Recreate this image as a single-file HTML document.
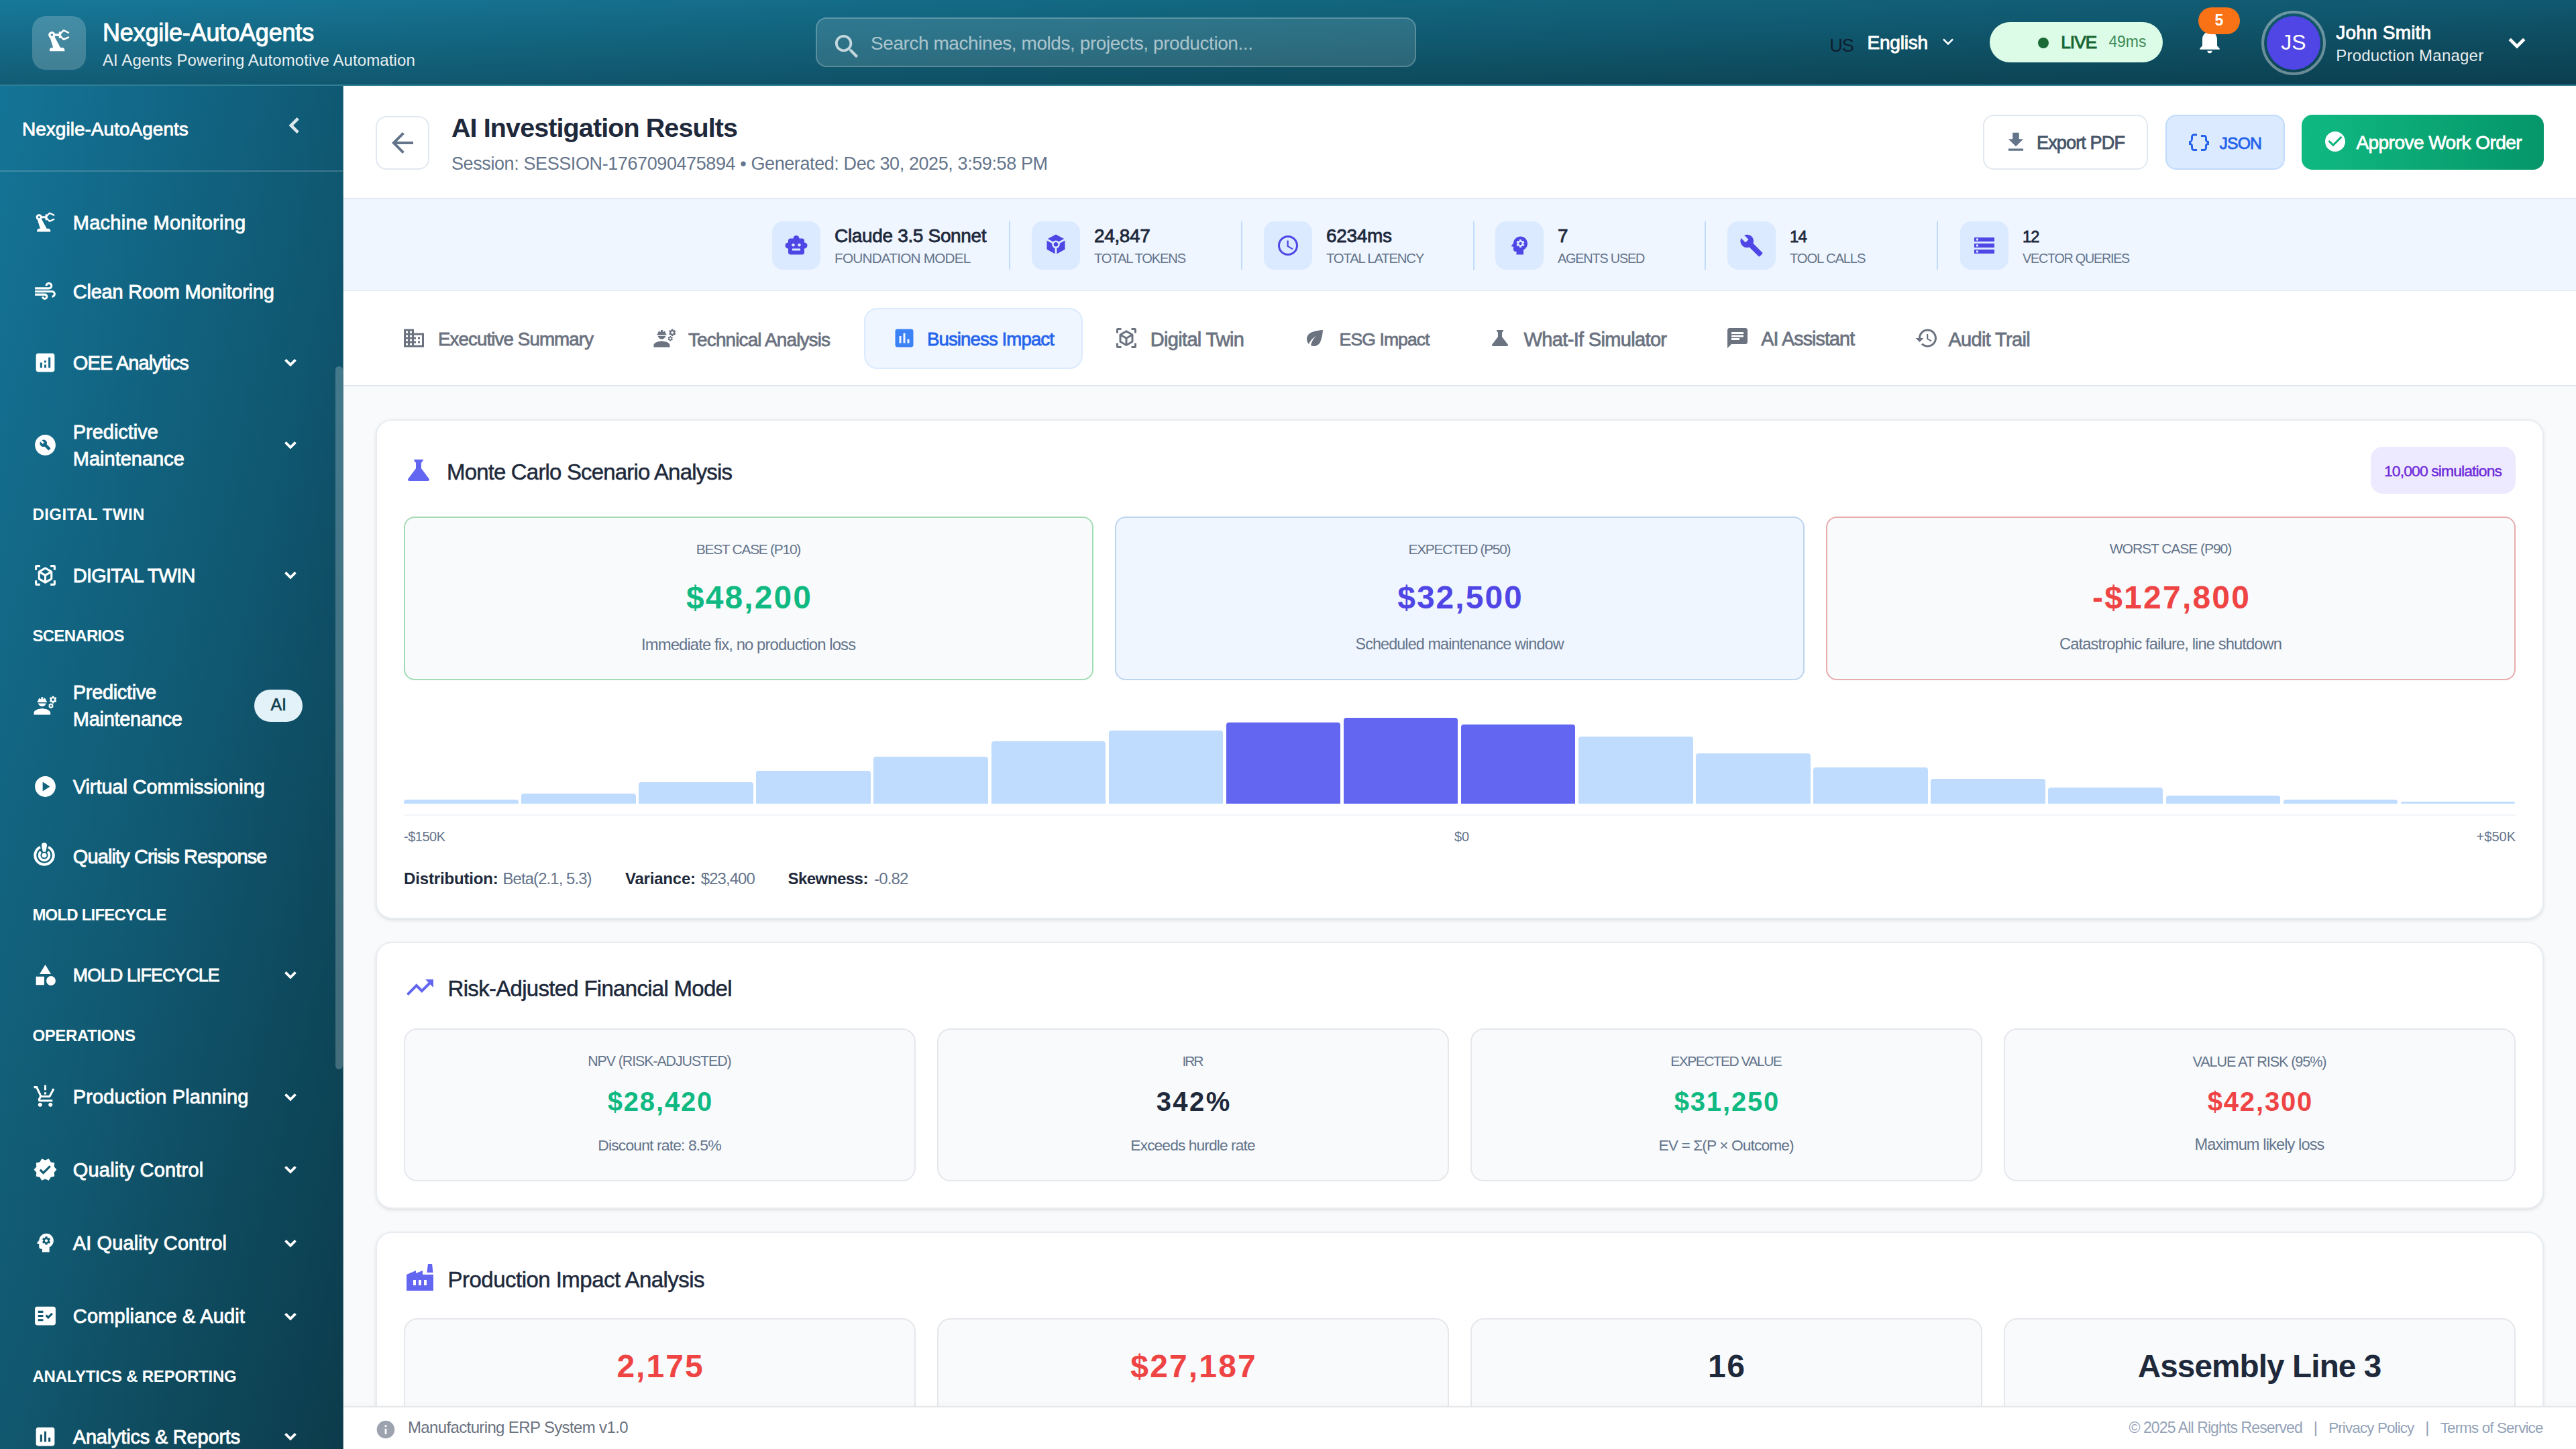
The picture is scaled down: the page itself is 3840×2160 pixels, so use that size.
<!DOCTYPE html>
<html><head><meta charset="utf-8"><title>AI Investigation Results</title><style>
html,body{margin:0;padding:0;background:#f8fafc;overflow:hidden;}
#app{position:relative;width:1920px;height:1080px;overflow:hidden;zoom:2;font-family:"Liberation Sans",sans-serif;}
@media (max-width:2400px){#app{zoom:1;}}
.a{position:absolute;}
.t{position:absolute;white-space:nowrap;}
svg.a{display:block;}
</style></head>
<body><div id="app">
<div class="a" style="left:0.00px;top:0.00px;width:1920.00px;height:64.00px;background:linear-gradient(to bottom right,rgba(0,0,0,0) 50%,rgba(0,0,0,0.08) 100%),linear-gradient(180deg,rgba(0,0,0,0) 0%,rgba(0,0,0,0.24) 100%),linear-gradient(90deg,#177899 0%,#12667f 50%,#10586f 100%);"></div>
<div class="a" style="left:0.00px;top:63.00px;width:1920.00px;height:1.00px;background:#2f7f97;"></div>
<div class="a" style="left:24.00px;top:12.00px;width:40.00px;height:40.00px;border-radius:10px;background:rgba(255,255,255,0.2);"></div>
<svg class="a" style="left:33.30px;top:20.00px;" width="20.7" height="20.7" viewBox="0 0 24 24" fill="#fff"><path d="M19.93 8.35l-3.6 1.68L14 7.7V6.3l2.33-2.33 3.6 1.68c.38.18.82.01 1-.36.18-.38.01-.82-.36-1l-3.92-1.83c-.38-.18-.83-.1-1.13.2L13.78 4.4c-.18-.24-.46-.4-.78-.4-.55 0-1 .45-1 1v1H8.82C8.4 4.84 7.3 4 6 4 4.34 4 3 5.34 3 7c0 1.1.6 2.05 1.48 2.58L7.08 18H6c-1.1 0-2 .9-2 2v1h13v-1c0-1.1-.9-2-2-2h-1.62L8.41 8.77c.17-.24.31-.49.41-.77H12v1c0 .55.45 1 1 1 .32 0 .6-.16.78-.4l1.74 1.74c.3.3.75.38 1.13.2l3.92-1.83c.38-.18.54-.62.36-1-.18-.37-.62-.54-1-.36zM6 8c-.55 0-1-.45-1-1s.45-1 1-1 1 .45 1 1-.45 1-1 1z"/></svg>
<div class="t " style="top:12.91px;font-size:18px;line-height:22.5px;color:#ffffff;-webkit-text-stroke:0.5px #ffffff;letter-spacing:-0.088px;left:76.50px;">Nexgile-AutoAgents</div>
<div class="t " style="top:37.41px;font-size:12px;line-height:15.0px;color:rgba(255,255,255,0.92);letter-spacing:0.054px;left:76.50px;">AI Agents Powering Automotive Automation</div>
<div class="a" style="left:608.00px;top:13.00px;width:447.60px;height:37.00px;box-sizing:border-box;border-radius:8px;background:rgba(255,255,255,0.12);border:1px solid rgba(255,255,255,0.22);"></div>
<svg class="a" style="left:619.60px;top:22.80px;" width="23.5" height="23.5" viewBox="0 0 24 24" fill="rgba(255,255,255,0.72)"><path d="M15.5 14h-.79l-.28-.27C15.41 12.59 16 11.11 16 9.5 16 5.91 13.09 3 9.5 3S3 5.91 3 9.5 5.91 16 9.5 16c1.61 0 3.09-.59 4.23-1.57l.27.28v.79l5 4.99L20.49 19l-4.99-5zm-6 0C7.01 14 5 11.99 5 9.5S7.01 5 9.5 5 14 7.01 14 9.5 11.99 14 9.5 14z"/></svg>
<div class="t " style="top:23.70px;font-size:14px;line-height:17.5px;color:rgba(255,255,255,0.62);letter-spacing:-0.216px;left:649.00px;">Search machines, molds, projects, production...</div>
<div class="t " style="top:25.32px;font-size:13.57px;line-height:16.96px;color:#0f1d2e;letter-spacing:-0.451px;left:1363.60px;">US</div>
<div class="t " style="top:23.00px;font-size:14px;line-height:17.5px;color:#ffffff;-webkit-text-stroke:0.45px #ffffff;letter-spacing:-0.120px;left:1391.80px;">English</div>
<svg class="a" style="left:1444.20px;top:23.00px;" width="16" height="16" viewBox="0 0 24 24" fill="#fff"><path d="M16.59 8.59 12 13.17 7.41 8.59 6 10l6 6 6-6z"/></svg>
<div class="a" style="left:1483.20px;top:16.70px;width:128.80px;height:29.70px;border-radius:15px;background:#dcfce7;"></div>
<div class="a" style="left:1519.20px;top:28.00px;width:8.00px;height:8.00px;border-radius:50%;background:#1c6b36;"></div>
<div class="t " style="top:23.39px;font-size:13.08px;line-height:16.35px;color:#166534;-webkit-text-stroke:0.5px #166534;letter-spacing:-0.452px;left:1536.10px;">LIVE</div>
<div class="t " style="top:23.82px;font-size:11.5px;line-height:14.38px;color:#3f8a57;letter-spacing:-0.040px;left:1571.70px;">49ms</div>
<svg class="a" style="left:1635.80px;top:19.70px;" width="22" height="22" viewBox="0 0 24 24" fill="#fff"><path d="M12 22c1.1 0 2-.9 2-2h-4c0 1.1.89 2 2 2zm6-6v-5c0-3.07-1.64-5.64-4.5-6.32V4c0-.83-.67-1.5-1.5-1.5s-1.5.67-1.5 1.5v.68C7.63 5.36 6 7.92 6 11v5l-2 2v1h16v-1l-2-2z"/></svg>
<div class="a" style="left:1638.40px;top:5.40px;width:31.10px;height:20.10px;border-radius:10px;background:#f97316;"></div>
<div class="t " style="top:7.82px;font-size:11.5px;line-height:14.38px;color:#ffffff;font-weight:700;left:1053.90px;width:1200px;text-align:center;">5</div>
<div class="a" style="left:1685.60px;top:7.90px;width:48.00px;height:48.00px;box-sizing:border-box;border-radius:50%;border:2.2px solid rgba(255,255,255,0.38);"></div>
<div class="a" style="left:1689.60px;top:12.00px;width:40.00px;height:40.00px;border-radius:50%;background:#4f46e5;"></div>
<div class="t " style="top:21.45px;font-size:16px;line-height:20.0px;color:#ffffff;left:1109.50px;width:1200px;text-align:center;">JS</div>
<div class="t " style="top:15.70px;font-size:14px;line-height:17.5px;color:#ffffff;-webkit-text-stroke:0.45px #ffffff;letter-spacing:0.107px;left:1741.10px;">John Smith</div>
<div class="t " style="top:34.04px;font-size:12px;line-height:15.0px;color:rgba(255,255,255,0.92);letter-spacing:0.114px;left:1741.10px;">Production Manager</div>
<svg class="a" style="left:1864.00px;top:19.90px;" width="24" height="24" viewBox="0 0 24 24" fill="none"><path d="M6.6 9.2l5.4 5.4 5.4-5.4" fill="none" stroke="#fff" stroke-width="2.4"/></svg>
<div class="a" style="left:0.00px;top:64.00px;width:256.00px;height:1016.00px;background:linear-gradient(to bottom right,rgba(0,0,0,0) 50%,rgba(0,0,0,0.1) 100%),linear-gradient(90deg,rgba(0,0,0,0) 0%,rgba(0,0,0,0.24) 100%),linear-gradient(180deg,#147497 0%,#11576e 100%);"></div>
<div class="a" style="left:255.50px;top:64.00px;width:0.50px;height:1016.00px;background:rgba(255,255,255,0.25);"></div>
<div class="a" style="left:0.00px;top:127.00px;width:255.50px;height:1.00px;background:rgba(255,255,255,0.18);"></div>
<div class="t " style="top:87.65px;font-size:14px;line-height:17.5px;color:#ffffff;-webkit-text-stroke:0.42px #ffffff;letter-spacing:0.010px;left:16.50px;">Nexgile-AutoAgents</div>
<svg class="a" style="left:207.30px;top:81.50px;" width="24" height="24" viewBox="0 0 24 24" fill="none"><path d="M14.6 6.8l-5.2 5.2 5.2 5.2" fill="none" stroke="rgba(255,255,255,0.85)" stroke-width="2.3"/></svg>
<div class="a" style="left:250.00px;top:273.00px;width:5.50px;height:524.00px;border-radius:3px;background:rgba(255,255,255,0.22);"></div>
<div class="t " style="top:157.01px;font-size:14.5px;line-height:18.12px;color:#ffffff;-webkit-text-stroke:0.42px #ffffff;letter-spacing:0.127px;left:54.40px;">Machine Monitoring</div>
<svg class="a" style="left:24.30px;top:156.50px;" width="18.5" height="18.5" viewBox="0 0 24 24" fill="#fff"><path d="M19.93 8.35l-3.6 1.68L14 7.7V6.3l2.33-2.33 3.6 1.68c.38.18.82.01 1-.36.18-.38.01-.82-.36-1l-3.92-1.83c-.38-.18-.83-.1-1.13.2L13.78 4.4c-.18-.24-.46-.4-.78-.4-.55 0-1 .45-1 1v1H8.82C8.4 4.84 7.3 4 6 4 4.34 4 3 5.34 3 7c0 1.1.6 2.05 1.48 2.58L7.08 18H6c-1.1 0-2 .9-2 2v1h13v-1c0-1.1-.9-2-2-2h-1.62L8.41 8.77c.17-.24.31-.49.41-.77H12v1c0 .55.45 1 1 1 .32 0 .6-.16.78-.4l1.74 1.74c.3.3.75.38 1.13.2l3.92-1.83c.38-.18.54-.62.36-1-.18-.37-.62-.54-1-.36zM6 8c-.55 0-1-.45-1-1s.45-1 1-1 1 .45 1 1-.45 1-1 1z"/></svg>
<div class="t " style="top:208.71px;font-size:14.5px;line-height:18.12px;color:#ffffff;-webkit-text-stroke:0.42px #ffffff;letter-spacing:-0.116px;left:54.40px;">Clean Room Monitoring</div>
<svg class="a" style="left:24.30px;top:208.20px;" width="18.5" height="18.5" viewBox="0 0 24 24" fill="#fff"><path d="M14.5 17c0 1.65-1.35 3-3 3s-3-1.35-3-3h2c0 .55.45 1 1 1s1-.45 1-1-.45-1-1-1H2v-2h9.5c1.65 0 3 1.35 3 3zM19 6.5C19 4.57 17.43 3 15.5 3S12 4.57 12 6.5h2c0-.83.67-1.5 1.5-1.5s1.5.67 1.5 1.5S16.33 8 15.5 8H2v2h13.5c1.93 0 3.5-1.57 3.5-3.5zm-.5 4.5H2v2h16.5c.83 0 1.5.67 1.5 1.5S19.33 16 18.5 16v2c1.93 0 3.5-1.57 3.5-3.5S20.43 11 18.5 11z"/></svg>
<div class="t " style="top:261.31px;font-size:14.5px;line-height:18.12px;color:#ffffff;-webkit-text-stroke:0.42px #ffffff;letter-spacing:-0.448px;left:54.40px;">OEE Analytics</div>
<svg class="a" style="left:24.30px;top:260.80px;" width="18.5" height="18.5" viewBox="0 0 24 24" fill="#fff"><path d="M19 3H5c-1.1 0-2 .9-2 2v14c0 1.1.9 2 2 2h14c1.1 0 2-.9 2-2V5c0-1.1-.9-2-2-2zM9 17H7v-5h2v5zm4 0h-2v-3h2v3zm0-5h-2v-2h2v2zm4 5h-2V7h2v10z"/></svg>
<svg class="a" style="left:207.50px;top:261.05px;" width="18" height="18" viewBox="0 0 24 24" fill="#fff"><path d="M7 9.6l5 5 5-5" fill="none" stroke="#fff" stroke-width="2.5"/></svg>
<div class="t " style="top:312.81px;font-size:14.5px;line-height:18.12px;color:#ffffff;-webkit-text-stroke:0.42px #ffffff;letter-spacing:-0.018px;left:54.40px;">Predictive</div>
<div class="t " style="top:332.91px;font-size:14.5px;line-height:18.12px;color:#ffffff;-webkit-text-stroke:0.42px #ffffff;letter-spacing:-0.003px;left:54.40px;">Maintenance</div>
<svg class="a" style="left:24.30px;top:322.35px;" width="18.5" height="18.5" viewBox="0 0 24 24" fill="#fff"><path d="M12 2C6.48 2 2 6.48 2 12c0 5.52 4.48 10 10 10s10-4.48 10-10C22 6.48 17.52 2 12 2zm4.9 13.49l-1.4 1.4c-.2.2-.51.2-.71 0l-3.41-3.41c-1.22.43-2.64.17-3.62-.81-1.11-1.11-1.3-2.79-.59-4.1l2.35 2.35 1.41-1.41-2.35-2.34c1.32-.71 2.99-.52 4.1.59.98.98 1.24 2.4.81 3.62l3.41 3.41c.19.19.19.51 0 .7z"/></svg>
<svg class="a" style="left:207.50px;top:322.60px;" width="18" height="18" viewBox="0 0 24 24" fill="#fff"><path d="M7 9.6l5 5 5-5" fill="none" stroke="#fff" stroke-width="2.5"/></svg>
<div class="t " style="top:375.94px;font-size:12px;line-height:15.0px;color:#ffffff;font-weight:700;letter-spacing:0.238px;left:24.20px;">DIGITAL TWIN</div>
<div class="t " style="top:419.91px;font-size:14.5px;line-height:18.12px;color:#ffffff;-webkit-text-stroke:0.42px #ffffff;letter-spacing:-0.390px;left:54.40px;">DIGITAL TWIN</div>
<svg class="a" style="left:24.30px;top:419.40px;" width="18.5" height="18.5" viewBox="0 0 24 24" fill="#fff"><path d="M18.25 7.6l-5.5-3.18c-.46-.27-1.04-.27-1.5 0L5.75 7.6c-.46.27-.75.76-.75 1.3v6.35c0 .54.29 1.03.75 1.3l5.5 3.18c.46.27 1.04.27 1.5 0l5.5-3.18c.46-.27.75-.76.75-1.3V8.9c0-.54-.29-1.03-.75-1.3zM7 14.96v-4.62l4 2.32v4.61l-4-2.31zm5-4.03L8 8.61l4-2.31 4 2.31-4 2.32zm1 6.34v-4.61l4-2.32v4.62l-4 2.31zM7 2H3.5C2.67 2 2 2.67 2 3.5V7h2V4h3V2zm10 0h3.5c.83 0 1.5.67 1.5 1.5V7h-2V4h-3V2zM7 22H3.5c-.83 0-1.5-.67-1.5-1.5V17h2v3h3v2zm10 0h3.5c.83 0 1.5-.67 1.5-1.5V17h-2v3h-3v2z"/></svg>
<svg class="a" style="left:207.50px;top:419.65px;" width="18" height="18" viewBox="0 0 24 24" fill="#fff"><path d="M7 9.6l5 5 5-5" fill="none" stroke="#fff" stroke-width="2.5"/></svg>
<div class="t " style="top:466.34px;font-size:12px;line-height:15.0px;color:#ffffff;font-weight:700;letter-spacing:-0.343px;left:24.20px;">SCENARIOS</div>
<div class="t " style="top:507.21px;font-size:14.5px;line-height:18.12px;color:#ffffff;-webkit-text-stroke:0.42px #ffffff;letter-spacing:-0.163px;left:54.40px;">Predictive</div>
<div class="t " style="top:527.11px;font-size:14.5px;line-height:18.12px;color:#ffffff;-webkit-text-stroke:0.42px #ffffff;letter-spacing:-0.143px;left:54.40px;">Maintenance</div>
<svg class="a" style="left:24.30px;top:516.65px;" width="18.5" height="18.5" viewBox="0 0 24 24" fill="#fff"><path d="M9 15c-2.67 0-8 1.34-8 4v2h16v-2c0-2.66-5.33-4-8-4zm13.1-8.16c.01-.11.02-.22.02-.34 0-.12-.01-.23-.03-.34l.74-.58c.07-.05.08-.15.04-.22l-.7-1.21c-.04-.08-.14-.1-.21-.08l-.86.35c-.18-.14-.38-.25-.59-.34l-.13-.93c-.02-.09-.09-.15-.18-.15h-1.4c-.09 0-.16.06-.17.15l-.13.93c-.21.09-.41.21-.59.34l-.87-.35c-.08-.03-.17 0-.21.08l-.7 1.21c-.04.08-.03.17.04.22l.74.58c-.02.11-.03.23-.03.34 0 .11.01.23.03.34l-.74.58c-.07.05-.08.15-.04.22l.7 1.21c.04.08.14.1.21.08l.87-.35c.18.14.38.25.59.34l.13.93c.01.09.08.15.17.15h1.4c.09 0 .16-.06.17-.15l.13-.93c.21-.09.41-.21.59-.34l.87.35c.08.03.17 0 .21-.08l.7-1.21c.04-.08.03-.17-.04-.22l-.73-.58zm-2.6.91c-.69 0-1.25-.56-1.25-1.25s.56-1.25 1.25-1.25 1.25.56 1.25 1.25-.56 1.25-1.25 1.25zm.42 3.93-.5-.87c-.03-.06-.1-.08-.15-.06l-.62.25c-.13-.1-.27-.18-.42-.24l-.09-.66c-.02-.06-.08-.1-.14-.1h-1c-.06 0-.11.04-.12.11l-.09.66c-.15.06-.29.15-.42.24l-.62-.25c-.06-.02-.12 0-.15.06l-.5.87c-.03.06-.02.12.03.16l.53.41c-.01.08-.02.16-.02.24 0 .08.01.17.02.24l-.53.41c-.05.04-.06.11-.03.16l.5.87c.03.06.1.08.15.06l.62-.25c.13.1.27.18.42.24l.09.66c.01.07.06.11.12.11h1c.06 0 .12-.04.12-.11l.09-.66c.15-.06.29-.15.42-.24l.62.25c.06.02.12 0 .15-.06l.5-.87c.03-.06.02-.12-.03-.16l-.52-.41c.01-.08.02-.16.02-.24 0-.08-.01-.17-.02-.24l.53-.41c.05-.04.06-.11.04-.17zm-2.42 1.65c-.46 0-.83-.38-.83-.83 0-.46.38-.83.83-.83s.83.38.83.83c0 .46-.37.83-.83.83zM4.74 9h8.53c.27 0 .49-.22.49-.49v-.02c0-.27-.22-.49-.49-.49H13c0-1.48-.81-2.75-2-3.45v.95c0 .28-.22.5-.5.5s-.5-.22-.5-.5V4.14C9.68 4.06 9.35 4 9 4s-.68.06-1 .14V5.5c0 .28-.22.5-.5.5S7 5.78 7 5.5v-.95C5.81 5.25 5 6.52 5 8h-.26c-.27 0-.49.22-.49.49v.03c0 .26.22.48.49.48zM9 13c1.86 0 3.41-1.28 3.86-3H5.14c.45 1.72 2 3 3.86 3z"/></svg>
<div class="a" style="left:189.70px;top:513.90px;width:35.90px;height:23.90px;border-radius:12px;background:#e3f1f8;"></div>
<div class="t " style="top:517.56px;font-size:12.5px;line-height:15.62px;color:#0f3d4f;-webkit-text-stroke:0.3px #0f3d4f;left:-392.40px;width:1200px;text-align:center;">AI</div>
<div class="t " style="top:577.51px;font-size:14.5px;line-height:18.12px;color:#ffffff;-webkit-text-stroke:0.42px #ffffff;letter-spacing:-0.049px;left:54.40px;">Virtual Commissioning</div>
<svg class="a" style="left:24.30px;top:577.00px;" width="18.5" height="18.5" viewBox="0 0 24 24" fill="#fff"><path d="M12 2C6.48 2 2 6.48 2 12s4.48 10 10 10 10-4.48 10-10S17.52 2 12 2zM9.5 16.5v-9l7 4.5-7 4.5z"/></svg>
<div class="t " style="top:629.41px;font-size:14.5px;line-height:18.12px;color:#ffffff;-webkit-text-stroke:0.42px #ffffff;letter-spacing:-0.451px;left:54.40px;">Quality Crisis Response</div>
<svg class="a" style="left:25px;top:628.10px" width="16" height="17.5" viewBox="-16 -19 32 35" fill="#fff"><path d="M-6 -12.3A13.7 13.7 0 1 0 6 -12.3" fill="none" stroke="#fff" stroke-width="4"/><path d="M-5.2 -5.33A7.45 7.45 0 1 0 5.2 -5.33" fill="none" stroke="#fff" stroke-width="3.7"/><circle cx="0" cy="0" r="3.6"/><path d="M-4.05 -14.6A4.05 4.05 0 0 1 4.05 -14.6L2.3 -5.6Q0 -4.9 -2.3 -5.6Z"/></svg>
<div class="t " style="top:674.34px;font-size:12px;line-height:15.0px;color:#ffffff;font-weight:700;letter-spacing:-0.402px;left:24.20px;">MOLD LIFECYCLE</div>
<div class="t " style="top:719.00px;font-size:13.38px;line-height:16.73px;color:#ffffff;-webkit-text-stroke:0.42px #ffffff;letter-spacing:-0.450px;left:54.40px;">MOLD LIFECYCLE</div>
<svg class="a" style="left:24.30px;top:717.40px;" width="18.5" height="18.5" viewBox="0 0 24 24" fill="#fff"><path d="M12 2l-5.5 9h11zM17.5 13a4.5 4.5 0 1 0 0 9 4.5 4.5 0 1 0 0-9zM3 13.5h8v8H3z"/></svg>
<svg class="a" style="left:207.50px;top:717.65px;" width="18" height="18" viewBox="0 0 24 24" fill="#fff"><path d="M7 9.6l5 5 5-5" fill="none" stroke="#fff" stroke-width="2.5"/></svg>
<div class="t " style="top:764.34px;font-size:12px;line-height:15.0px;color:#ffffff;font-weight:700;letter-spacing:-0.184px;left:24.20px;">OPERATIONS</div>
<div class="t " style="top:808.71px;font-size:14.5px;line-height:18.12px;color:#ffffff;-webkit-text-stroke:0.42px #ffffff;letter-spacing:0.056px;left:54.40px;">Production Planning</div>
<svg class="a" style="left:24.30px;top:808.20px;" width="18.5" height="18.5" viewBox="0 0 24 24" fill="#fff"><path d="M13 10h-2V8h2v2zm0-4h-2V1h2v5zM7 18c-1.1 0-1.99.9-1.99 2S5.9 22 7 22s2-.9 2-2-.9-2-2-2zm10 0c-1.1 0-1.99.9-1.99 2s.89 2 1.99 2 2-.9 2-2-.9-2-2-2zm-8.9-5h7.45c.75 0 1.41-.41 1.75-1.03L21 4.96 19.25 4l-3.7 7H8.53L4.27 2H1v2h2l3.6 7.59-1.35 2.44C4.52 15.37 5.48 17 7 17h12v-2H7l1.1-2z"/></svg>
<svg class="a" style="left:207.50px;top:808.45px;" width="18" height="18" viewBox="0 0 24 24" fill="#fff"><path d="M7 9.6l5 5 5-5" fill="none" stroke="#fff" stroke-width="2.5"/></svg>
<div class="t " style="top:862.91px;font-size:14.5px;line-height:18.12px;color:#ffffff;-webkit-text-stroke:0.42px #ffffff;letter-spacing:0.093px;left:54.40px;">Quality Control</div>
<svg class="a" style="left:24.30px;top:862.40px;" width="18.5" height="18.5" viewBox="0 0 24 24" fill="#fff"><path d="M23 11.99 20.56 9.2l.34-3.69-3.61-.82L15.4 1.5 12 2.96 8.6 1.5 6.71 4.69 3.1 5.5l.34 3.7L1 11.99l2.44 2.79-.34 3.7 3.61.82L8.6 22.5l3.4-1.47 3.4 1.46 1.89-3.19 3.61-.82-.34-3.69L23 11.99zm-12.91 4.72-3.8-3.81 1.48-1.48 2.32 2.33 5.85-5.87 1.48 1.48-7.33 7.35z"/></svg>
<svg class="a" style="left:207.50px;top:862.65px;" width="18" height="18" viewBox="0 0 24 24" fill="#fff"><path d="M7 9.6l5 5 5-5" fill="none" stroke="#fff" stroke-width="2.5"/></svg>
<div class="t " style="top:917.51px;font-size:14.5px;line-height:18.12px;color:#ffffff;-webkit-text-stroke:0.42px #ffffff;letter-spacing:0.057px;left:54.40px;">AI Quality Control</div>
<svg class="a" style="left:24.30px;top:917.00px;" width="18.5" height="18.5" viewBox="0 0 24 24" fill="#fff"><path d="M13 8.57c-.79 0-1.43.64-1.43 1.43s.64 1.43 1.43 1.43 1.43-.64 1.43-1.43-.64-1.43-1.43-1.43zM13 3C9.25 3 6.2 5.94 6.02 9.64L4.1 12.2c-.25.33-.01.8.4.8H6v3c0 1.1.9 2 2 2h1v3h7v-4.68c2.36-1.12 4-3.53 4-6.32 0-3.87-3.13-7-7-7zm3 7c0 .13-.01.26-.02.39l.83.66c.08.06.1.16.05.25l-.8 1.39c-.05.09-.16.12-.24.09l-.99-.4c-.21.16-.43.29-.67.39L14 13.83c-.01.1-.1.17-.2.17h-1.6c-.1 0-.18-.07-.2-.17l-.15-1.06c-.25-.1-.47-.23-.68-.39l-.99.4c-.09.03-.2 0-.25-.09l-.8-1.39c-.05-.08-.03-.19.05-.25l.84-.66c-.01-.13-.02-.26-.02-.39s.02-.27.04-.39l-.85-.66c-.08-.06-.1-.16-.05-.26l.8-1.38c.05-.09.15-.12.24-.09l1 .4c.2-.15.43-.29.67-.39L12 6.17c.02-.1.1-.17.2-.17h1.6c.1 0 .18.07.2.17l.15 1.06c.24.1.46.23.67.39l1-.4c.09-.03.2 0 .24.09l.8 1.38c.05.09.03.2-.05.26l-.85.66c.03.12.04.25.04.39z"/></svg>
<svg class="a" style="left:207.50px;top:917.25px;" width="18" height="18" viewBox="0 0 24 24" fill="#fff"><path d="M7 9.6l5 5 5-5" fill="none" stroke="#fff" stroke-width="2.5"/></svg>
<div class="t " style="top:972.11px;font-size:14.5px;line-height:18.12px;color:#ffffff;-webkit-text-stroke:0.42px #ffffff;letter-spacing:0.092px;left:54.40px;">Compliance &amp; Audit</div>
<svg class="a" style="left:24.30px;top:971.60px;" width="18.5" height="18.5" viewBox="0 0 24 24" fill="#fff"><path d="M20 3H4c-1.1 0-2 .9-2 2v14c0 1.1.9 2 2 2h16c1.1 0 2-.9 2-2V5c0-1.1-.9-2-2-2zM10 17H5v-2h5v2zm0-4H5v-2h5v2zm0-4H5V7h5v2zm4.82 6L12 12.16l1.41-1.41 1.41 1.42L17.99 9l1.42 1.42L14.82 15z"/></svg>
<svg class="a" style="left:207.50px;top:971.85px;" width="18" height="18" viewBox="0 0 24 24" fill="#fff"><path d="M7 9.6l5 5 5-5" fill="none" stroke="#fff" stroke-width="2.5"/></svg>
<div class="t " style="top:1018.34px;font-size:12px;line-height:15.0px;color:#ffffff;font-weight:700;letter-spacing:-0.102px;left:24.20px;">ANALYTICS &amp; REPORTING</div>
<div class="t " style="top:1061.91px;font-size:14.5px;line-height:18.12px;color:#ffffff;-webkit-text-stroke:0.42px #ffffff;letter-spacing:-0.101px;left:54.40px;">Analytics &amp; Reports</div>
<svg class="a" style="left:24.30px;top:1061.40px;" width="18.5" height="18.5" viewBox="0 0 24 24" fill="#fff"><path d="M19 3H5c-1.1 0-2 .9-2 2v14c0 1.1.9 2 2 2h14c1.1 0 2-.9 2-2V5c0-1.1-.9-2-2-2zM9 17H7v-7h2v7zm4 0h-2V7h2v10zm4 0h-2v-4h2v4z"/></svg>
<svg class="a" style="left:207.50px;top:1061.65px;" width="18" height="18" viewBox="0 0 24 24" fill="#fff"><path d="M7 9.6l5 5 5-5" fill="none" stroke="#fff" stroke-width="2.5"/></svg>
<div class="a" style="left:256.00px;top:64.00px;width:1664.00px;height:84.00px;background:#ffffff;"></div>
<div class="a" style="left:256.00px;top:147.50px;width:1664.00px;height:1.00px;background:#e2e8f0;"></div>
<div class="a" style="left:280.00px;top:86.50px;width:40.00px;height:40.00px;box-sizing:border-box;border:1px solid #e2e8f0;border-radius:8px;background:#fff;"></div>
<svg class="a" style="left:288.00px;top:94.70px;" width="24" height="24" viewBox="0 0 24 24" fill="#64748b"><path d="M20 11H7.83l5.59-5.59L12 4l-8 8 8 8 1.41-1.41L7.83 13H20v-2z"/></svg>
<div class="t " style="top:82.81px;font-size:19.75px;line-height:24.69px;color:#1e293b;font-weight:700;letter-spacing:-0.451px;left:336.50px;">AI Investigation Results</div>
<div class="t " style="top:113.88px;font-size:13.5px;line-height:16.88px;color:#64748b;letter-spacing:-0.202px;left:336.50px;">Session: SESSION-1767090475894 • Generated: Dec 30, 2025, 3:59:58 PM</div>
<div class="a" style="left:1477.80px;top:85.70px;width:123.40px;height:41.00px;box-sizing:border-box;border:1px solid #e2e8f0;border-radius:8px;background:#fff;"></div>
<svg class="a" style="left:1493.00px;top:96.40px;" width="19" height="19" viewBox="0 0 24 24" fill="#64748b"><path d="M5 20h14v-2H5v2zM19 9h-4V3H9v6H5l7 7 7-7z"/></svg>
<div class="t " style="top:98.13px;font-size:13.55px;line-height:16.94px;color:#475569;-webkit-text-stroke:0.4px #475569;letter-spacing:-0.447px;left:1518.00px;">Export PDF</div>
<div class="a" style="left:1613.90px;top:85.70px;width:88.90px;height:41.00px;box-sizing:border-box;border:1px solid #bfdbfe;border-radius:8px;background:#dbeafe;"></div>
<svg class="a" style="left:1630.10px;top:97.45px;" width="18" height="18" viewBox="0 0 24 24" fill="#2563eb"><path d="M4 7v2c0 .55-.45 1-1 1H2v4h1c.55 0 1 .45 1 1v2c0 1.65 1.35 3 3 3h3v-2H7c-.55 0-1-.45-1-1v-2c0-1.3-.84-2.42-2-2.83v-.34C5.16 10.42 6 9.3 6 8V6c0-.55.45-1 1-1h3V3H7C5.35 3 4 4.35 4 6v1zm17 3c-.55 0-1-.45-1-1V7c0-1.65-1.35-3-3-3h-3v2h3c.55 0 1 .45 1 1v2c0 1.3.84 2.42 2 2.83v.34c-1.16.41-2 1.52-2 2.83v2c0 .55-.45 1-1 1h-3v2h3c1.65 0 3-1.35 3-3v-2c0-.55.45-1 1-1h1v-4h-1z"/></svg>
<div class="t " style="top:99.26px;font-size:12.39px;line-height:15.49px;color:#2563eb;-webkit-text-stroke:0.4px #2563eb;letter-spacing:-0.448px;left:1654.30px;">JSON</div>
<div class="a" style="left:1715.30px;top:85.70px;width:180.70px;height:41.00px;border-radius:8px;background:linear-gradient(90deg,#10b981,#059669);"></div>
<svg class="a" style="left:1731.50px;top:96.30px;" width="18" height="18" viewBox="0 0 24 24" fill="#ffffff"><path d="M12 2C6.48 2 2 6.48 2 12s4.48 10 10 10 10-4.48 10-10S17.52 2 12 2zm-2 15-5-5 1.41-1.41L10 14.17l7.59-7.59L19 8l-9 9z"/></svg>
<div class="t " style="top:97.70px;font-size:14px;line-height:17.5px;color:#ffffff;-webkit-text-stroke:0.4px #ffffff;letter-spacing:-0.266px;left:1756.20px;">Approve Work Order</div>
<div class="a" style="left:256.00px;top:148.50px;width:1664.00px;height:68.50px;background:#eff6ff;"></div>
<div class="a" style="left:256.00px;top:216.50px;width:1664.00px;height:1.00px;background:#dbeafe;"></div>
<div class="a" style="left:575.50px;top:165.00px;width:36.00px;height:36.00px;border-radius:8px;background:#dbeafe;"></div>
<svg class="a" style="left:584.50px;top:174.00px;" width="18" height="18" viewBox="0 0 24 24" fill="#4f46e5"><path d="M20 9V7c0-1.1-.9-2-2-2h-3c0-1.66-1.34-3-3-3S9 3.34 9 5H6c-1.1 0-2 .9-2 2v2c-1.66 0-3 1.34-3 3s1.34 3 3 3v4c0 1.1.9 2 2 2h12c1.1 0 2-.9 2-2v-4c1.66 0 3-1.34 3-3s-1.34-3-3-3zM7.5 11.5c0-.83.67-1.5 1.5-1.5s1.5.67 1.5 1.5S9.83 13 9 13s-1.5-.67-1.5-1.5zM16 17H8v-2h8v2zm-1-4c-.83 0-1.5-.67-1.5-1.5S14.17 10 15 10s1.5.67 1.5 1.5S15.83 13 15 13z"/></svg>
<div class="t " style="top:167.20px;font-size:14px;line-height:17.5px;color:#1e293b;-webkit-text-stroke:0.4px #1e293b;letter-spacing:-0.167px;left:622.00px;">Claude 3.5 Sonnet</div>
<div class="t " style="top:186.09px;font-size:10.4px;line-height:13.0px;color:#64748b;letter-spacing:-0.410px;left:622.00px;">FOUNDATION MODEL</div>
<div class="a" style="left:769.00px;top:165.00px;width:36.00px;height:36.00px;border-radius:8px;background:#dbeafe;"></div>
<svg class="a" style="left:778.00px;top:174.00px;" width="18" height="18" viewBox="0 0 24 24" fill="#4f46e5"><path d="M12 1 21 5.9 21 15.9 12 20.8 3 15.9 3 5.9z"/><path d="M2.5 5.6 12 10.9 21.5 5.6M12 10.9V21.5" stroke="#dbeafe" stroke-width="1.9" fill="none"/><circle cx="12" cy="10.9" r="3" fill="none" stroke="#dbeafe" stroke-width="1.8"/><circle cx="12" cy="10.9" r="2.1"/></svg>
<div class="t " style="top:167.20px;font-size:14px;line-height:17.5px;color:#1e293b;-webkit-text-stroke:0.4px #1e293b;letter-spacing:-0.184px;left:815.50px;">24,847</div>
<div class="t " style="top:186.39px;font-size:10.1px;line-height:12.62px;color:#64748b;letter-spacing:-0.601px;left:815.50px;">TOTAL TOKENS</div>
<div class="a" style="left:942.00px;top:165.00px;width:36.00px;height:36.00px;border-radius:8px;background:#dbeafe;"></div>
<svg class="a" style="left:951.00px;top:174.00px;" width="18" height="18" viewBox="0 0 24 24" fill="#4f46e5"><path d="M11.99 2C6.47 2 2 6.48 2 12s4.47 10 9.99 10C17.52 22 22 17.52 22 12S17.52 2 11.99 2zM12 20c-4.42 0-8-3.58-8-8s3.58-8 8-8 8 3.58 8 8-3.58 8-8 8zm.5-13H11v6l5.25 3.15.75-1.23-4.5-2.67z"/></svg>
<div class="t " style="top:167.20px;font-size:14px;line-height:17.5px;color:#1e293b;-webkit-text-stroke:0.4px #1e293b;letter-spacing:-0.161px;left:988.50px;">6234ms</div>
<div class="t " style="top:186.32px;font-size:10.17px;line-height:12.71px;color:#64748b;letter-spacing:-0.603px;left:988.50px;">TOTAL LATENCY</div>
<div class="a" style="left:1114.50px;top:165.00px;width:36.00px;height:36.00px;border-radius:8px;background:#dbeafe;"></div>
<svg class="a" style="left:1123.50px;top:174.00px;" width="18" height="18" viewBox="0 0 24 24" fill="#4f46e5"><path d="M13 8.57c-.79 0-1.43.64-1.43 1.43s.64 1.43 1.43 1.43 1.43-.64 1.43-1.43-.64-1.43-1.43-1.43zM13 3C9.25 3 6.2 5.94 6.02 9.64L4.1 12.2c-.25.33-.01.8.4.8H6v3c0 1.1.9 2 2 2h1v3h7v-4.68c2.36-1.12 4-3.53 4-6.32 0-3.87-3.13-7-7-7zm3 7c0 .13-.01.26-.02.39l.83.66c.08.06.1.16.05.25l-.8 1.39c-.05.09-.16.12-.24.09l-.99-.4c-.21.16-.43.29-.67.39L14 13.83c-.01.1-.1.17-.2.17h-1.6c-.1 0-.18-.07-.2-.17l-.15-1.06c-.25-.1-.47-.23-.68-.39l-.99.4c-.09.03-.2 0-.25-.09l-.8-1.39c-.05-.08-.03-.19.05-.25l.84-.66c-.01-.13-.02-.26-.02-.39s.02-.27.04-.39l-.85-.66c-.08-.06-.1-.16-.05-.26l.8-1.38c.05-.09.15-.12.24-.09l1 .4c.2-.15.43-.29.67-.39L12 6.17c.02-.1.1-.17.2-.17h1.6c.1 0 .18.07.2.17l.15 1.06c.24.1.46.23.67.39l1-.4c.09-.03.2 0 .24.09l.8 1.38c.05.09.03.2-.05.26l-.85.66c.03.12.04.25.04.39z"/></svg>
<div class="t " style="top:167.20px;font-size:14px;line-height:17.5px;color:#1e293b;-webkit-text-stroke:0.4px #1e293b;left:1161.00px;">7</div>
<div class="t " style="top:186.55px;font-size:9.93px;line-height:12.41px;color:#64748b;letter-spacing:-0.598px;left:1161.00px;">AGENTS USED</div>
<div class="a" style="left:1287.50px;top:165.00px;width:36.00px;height:36.00px;border-radius:8px;background:#dbeafe;"></div>
<svg class="a" style="left:1296.50px;top:174.00px;" width="18" height="18" viewBox="0 0 24 24" fill="#4f46e5"><path d="M22.7 19l-9.1-9.1c.9-2.3.4-5-1.5-6.9-2-2-5-2.4-7.4-1.3L9 6 6 9 1.6 4.7C.4 7.1.9 10.1 2.9 12.1c1.9 1.9 4.6 2.4 6.9 1.5l9.1 9.1c.4.4 1 .4 1.4 0l2.3-2.3c.5-.4.5-1.1.1-1.4z"/></svg>
<div class="t " style="top:169.05px;font-size:12.09px;line-height:15.11px;color:#1e293b;-webkit-text-stroke:0.4px #1e293b;letter-spacing:-0.448px;left:1334.00px;">14</div>
<div class="t " style="top:186.32px;font-size:10.17px;line-height:12.71px;color:#64748b;letter-spacing:-0.597px;left:1334.00px;">TOOL CALLS</div>
<div class="a" style="left:1461.00px;top:165.00px;width:36.00px;height:36.00px;border-radius:8px;background:#dbeafe;"></div>
<svg class="a" style="left:1470.00px;top:174.00px;" width="18" height="18" viewBox="0 0 24 24" fill="#4f46e5"><path d="M2 20h20v-4H2v4zm2-3h2v2H4v-2zM2 4v4h20V4H2zm4 3H4V5h2v2zm-4 7h20v-4H2v4zm2-3h2v2H4v-2z"/></svg>
<div class="t " style="top:169.31px;font-size:11.82px;line-height:14.78px;color:#1e293b;-webkit-text-stroke:0.4px #1e293b;letter-spacing:-0.448px;left:1507.50px;">12</div>
<div class="t " style="top:186.62px;font-size:9.86px;line-height:12.32px;color:#64748b;letter-spacing:-0.602px;left:1507.50px;">VECTOR QUERIES</div>
<div class="a" style="left:752.00px;top:165.00px;width:1.00px;height:36.00px;background:#bfdbfe;"></div>
<div class="a" style="left:925.00px;top:165.00px;width:1.00px;height:36.00px;background:#bfdbfe;"></div>
<div class="a" style="left:1098.00px;top:165.00px;width:1.00px;height:36.00px;background:#bfdbfe;"></div>
<div class="a" style="left:1270.50px;top:165.00px;width:1.00px;height:36.00px;background:#bfdbfe;"></div>
<div class="a" style="left:1443.50px;top:165.00px;width:1.00px;height:36.00px;background:#bfdbfe;"></div>
<div class="a" style="left:256.00px;top:217.00px;width:1664.00px;height:71.00px;background:#ffffff;"></div>
<div class="a" style="left:256.00px;top:287.00px;width:1664.00px;height:1.00px;background:#e2e8f0;"></div>
<div class="a" style="left:644.00px;top:229.50px;width:163.00px;height:45.50px;box-sizing:border-box;border:1px solid #dbeafe;border-radius:10px;background:#eff6ff;"></div>
<svg class="a" style="left:299.50px;top:243.00px;" width="18" height="18" viewBox="0 0 24 24" fill="#6b7280"><path d="M12 7V3H2v18h20V7H12zM6 19H4v-2h2v2zm0-4H4v-2h2v2zm0-4H4V9h2v2zm0-4H4V5h2v2zm4 12H8v-2h2v2zm0-4H8v-2h2v2zm0-4H8V9h2v2zm0-4H8V5h2v2zm10 12h-8v-2h2v-2h-2v-2h2v-2h-2V9h8v10zm-2-8h-2v2h2v-2zm0 4h-2v2h2v-2z"/></svg>
<div class="t " style="top:244.63px;font-size:13.86px;line-height:17.32px;color:#6b7280;-webkit-text-stroke:0.38px #6b7280;letter-spacing:-0.452px;left:326.50px;">Executive Summary</div>
<svg class="a" style="left:486.25px;top:243.00px;" width="18" height="18" viewBox="0 0 24 24" fill="#6b7280"><path d="M9 15c-2.67 0-8 1.34-8 4v2h16v-2c0-2.66-5.33-4-8-4zm13.1-8.16c.01-.11.02-.22.02-.34 0-.12-.01-.23-.03-.34l.74-.58c.07-.05.08-.15.04-.22l-.7-1.21c-.04-.08-.14-.1-.21-.08l-.86.35c-.18-.14-.38-.25-.59-.34l-.13-.93c-.02-.09-.09-.15-.18-.15h-1.4c-.09 0-.16.06-.17.15l-.13.93c-.21.09-.41.21-.59.34l-.87-.35c-.08-.03-.17 0-.21.08l-.7 1.21c-.04.08-.03.17.04.22l.74.58c-.02.11-.03.23-.03.34 0 .11.01.23.03.34l-.74.58c-.07.05-.08.15-.04.22l.7 1.21c.04.08.14.1.21.08l.87-.35c.18.14.38.25.59.34l.13.93c.01.09.08.15.17.15h1.4c.09 0 .16-.06.17-.15l.13-.93c.21-.09.41-.21.59-.34l.87.35c.08.03.17 0 .21-.08l.7-1.21c.04-.08.03-.17-.04-.22l-.73-.58zm-2.6.91c-.69 0-1.25-.56-1.25-1.25s.56-1.25 1.25-1.25 1.25.56 1.25 1.25-.56 1.25-1.25 1.25zm.42 3.93-.5-.87c-.03-.06-.1-.08-.15-.06l-.62.25c-.13-.1-.27-.18-.42-.24l-.09-.66c-.02-.06-.08-.1-.14-.1h-1c-.06 0-.11.04-.12.11l-.09.66c-.15.06-.29.15-.42.24l-.62-.25c-.06-.02-.12 0-.15.06l-.5.87c-.03.06-.02.12.03.16l.53.41c-.01.08-.02.16-.02.24 0 .08.01.17.02.24l-.53.41c-.05.04-.06.11-.03.16l.5.87c.03.06.1.08.15.06l.62-.25c.13.1.27.18.42.24l.09.66c.01.07.06.11.12.11h1c.06 0 .12-.04.12-.11l.09-.66c.15-.06.29-.15.42-.24l.62.25c.06.02.12 0 .15-.06l.5-.87c.03-.06.02-.12-.03-.16l-.52-.41c.01-.08.02-.16.02-.24 0-.08-.01-.17-.02-.24l.53-.41c.05-.04.06-.11.04-.17zm-2.42 1.65c-.46 0-.83-.38-.83-.83 0-.46.38-.83.83-.83s.83.38.83.83c0 .46-.37.83-.83.83zM4.74 9h8.53c.27 0 .49-.22.49-.49v-.02c0-.27-.22-.49-.49-.49H13c0-1.48-.81-2.75-2-3.45v.95c0 .28-.22.5-.5.5s-.5-.22-.5-.5V4.14C9.68 4.06 9.35 4 9 4s-.68.06-1 .14V5.5c0 .28-.22.5-.5.5S7 5.78 7 5.5v-.95C5.81 5.25 5 6.52 5 8h-.26c-.27 0-.49.22-.49.49v.03c0 .26.22.48.49.48zM9 13c1.86 0 3.41-1.28 3.86-3H5.14c.45 1.72 2 3 3.86 3z"/></svg>
<div class="t " style="top:244.50px;font-size:14.0px;line-height:17.5px;color:#6b7280;-webkit-text-stroke:0.38px #6b7280;letter-spacing:-0.448px;left:513.00px;">Technical Analysis</div>
<svg class="a" style="left:664.75px;top:243.00px;" width="18" height="18" viewBox="0 0 24 24" fill="#3b82f6"><path d="M19 3H5c-1.1 0-2 .9-2 2v14c0 1.1.9 2 2 2h14c1.1 0 2-.9 2-2V5c0-1.1-.9-2-2-2zM9 17H7v-7h2v7zm4 0h-2V7h2v10zm4 0h-2v-4h2v4z"/></svg>
<div class="t " style="top:244.68px;font-size:13.81px;line-height:17.26px;color:#2563eb;-webkit-text-stroke:0.38px #2563eb;letter-spacing:-0.451px;left:691.00px;">Business Impact</div>
<svg class="a" style="left:830.30px;top:243.00px;" width="18" height="18" viewBox="0 0 24 24" fill="#6b7280"><path d="M18.25 7.6l-5.5-3.18c-.46-.27-1.04-.27-1.5 0L5.75 7.6c-.46.27-.75.76-.75 1.3v6.35c0 .54.29 1.03.75 1.3l5.5 3.18c.46.27 1.04.27 1.5 0l5.5-3.18c.46-.27.75-.76.75-1.3V8.9c0-.54-.29-1.03-.75-1.3zM7 14.96v-4.62l4 2.32v4.61l-4-2.31zm5-4.03L8 8.61l4-2.31 4 2.31-4 2.32zm1 6.34v-4.61l4-2.32v4.62l-4 2.31zM7 2H3.5C2.67 2 2 2.67 2 3.5V7h2V4h3V2zm10 0h3.5c.83 0 1.5.67 1.5 1.5V7h-2V4h-3V2zM7 22H3.5c-.83 0-1.5-.67-1.5-1.5V17h2v3h3v2zm10 0h3.5c.83 0 1.5-.67 1.5-1.5V17h-2v3h-3v2z"/></svg>
<div class="t " style="top:244.01px;font-size:14.5px;line-height:18.12px;color:#6b7280;-webkit-text-stroke:0.38px #6b7280;letter-spacing:-0.343px;left:857.40px;">Digital Twin</div>
<svg class="a" style="left:971.00px;top:243.00px;" width="18" height="18" viewBox="0 0 24 24" fill="#6b7280"><path d="M6.05 8.05c-2.73 2.73-2.73 7.15-.02 9.88 1.47-3.4 4.09-6.24 7.36-7.93-2.77 2.34-4.71 5.61-5.39 9.32 2.6 1.23 5.8.78 7.95-1.37C19.43 14.47 20 4 20 4S9.53 4.57 6.05 8.05z"/></svg>
<div class="t " style="top:245.20px;font-size:13.27px;line-height:16.59px;color:#6b7280;-webkit-text-stroke:0.38px #6b7280;letter-spacing:-0.448px;left:998.30px;">ESG Impact</div>
<svg class="a" style="left:1109.00px;top:243.00px;" width="18" height="18" viewBox="0 0 24 24" fill="#6b7280"><path d="M19.8 18.4 14 10.67V6.5l1.35-1.69c.26-.33.03-.81-.39-.81H9.04c-.42 0-.65.48-.39.81L10 6.5v4.17L4.2 18.4c-.49.66-.02 1.6.8 1.6h14c.82 0 1.29-.94.8-1.6z"/></svg>
<div class="t " style="top:244.01px;font-size:14.5px;line-height:18.12px;color:#6b7280;-webkit-text-stroke:0.38px #6b7280;letter-spacing:-0.331px;left:1135.80px;">What-If Simulator</div>
<svg class="a" style="left:1285.90px;top:243.00px;" width="18" height="18" viewBox="0 0 24 24" fill="#6b7280"><path d="M20 2H4c-1.1 0-1.99.9-1.99 2L2 22l4-4h14c1.1 0 2-.9 2-2V4c0-1.1-.9-2-2-2zM6 9h12v2H6V9zm8 5H6v-2h8v2zm4-6H6V6h12v2z"/></svg>
<div class="t " style="top:244.15px;font-size:14.35px;line-height:17.94px;color:#6b7280;-webkit-text-stroke:0.38px #6b7280;letter-spacing:-0.452px;left:1312.60px;">AI Assistant</div>
<svg class="a" style="left:1426.75px;top:243.00px;" width="18" height="18" viewBox="0 0 24 24" fill="#6b7280"><path d="M13 3c-4.97 0-9 4.03-9 9H1l3.89 3.89.07.14L9 12H6c0-3.87 3.13-7 7-7s7 3.13 7 7-3.13 7-7 7c-1.93 0-3.68-.79-4.94-2.06l-1.42 1.42C8.27 19.99 10.51 21 13 21c4.97 0 9-4.03 9-9s-4.03-9-9-9zm-1 5v5l4.28 2.54.72-1.21-3.5-2.08V8H12z"/></svg>
<div class="t " style="top:244.01px;font-size:14.5px;line-height:18.12px;color:#6b7280;-webkit-text-stroke:0.38px #6b7280;letter-spacing:-0.337px;left:1452.20px;">Audit Trail</div>
<div class="a" style="left:256.00px;top:288.00px;width:1664.00px;height:760.00px;background:#f8fafc;"></div>
<div class="a" style="left:280.00px;top:312.50px;width:1616.00px;height:372.50px;box-sizing:border-box;border:1px solid #e8ecf1;border-radius:12px;background:#fff;box-shadow:0 1px 3px 0 rgba(0,0,0,0.08),0 1px 2px -1px rgba(0,0,0,0.08);"></div>
<svg class="a" style="left:300.00px;top:338.70px;" width="24" height="24" viewBox="0 0 24 24" fill="#6366f1"><path d="M19.8 18.4 14 10.67V6.5l1.35-1.69c.26-.33.03-.81-.39-.81H9.04c-.42 0-.65.48-.39.81L10 6.5v4.17L4.2 18.4c-.49.66-.02 1.6.8 1.6h14c.82 0 1.29-.94.8-1.6z"/></svg>
<div class="t " style="top:341.27px;font-size:16.5px;line-height:20.62px;color:#1e293b;letter-spacing:-0.418px;left:333.00px;-webkit-text-stroke:0.25px #1e293b;">Monte Carlo Scenario Analysis</div>
<div class="a" style="left:1767.00px;top:333.00px;width:108.00px;height:35.00px;border-radius:9px;background:#ede9fe;"></div>
<div class="t " style="top:343.75px;font-size:11.47px;line-height:14.34px;color:#6d28d9;letter-spacing:-0.450px;left:1777.00px;-webkit-text-stroke:0.2px #6d28d9;">10,000 simulations</div>
<div class="a" style="left:301.00px;top:385.00px;width:514.00px;height:122.00px;box-sizing:border-box;border:1px solid #a3dcb4;border-radius:8px;background:#f8fafc;"></div>
<div class="t " style="top:402.81px;font-size:10.49px;line-height:13.11px;color:#64748b;letter-spacing:-0.640px;left:-42.00px;width:1200px;text-align:center;text-indent:-0.640px;">BEST CASE (P10)</div>
<div class="t " style="top:430.38px;font-size:24px;line-height:30.0px;color:#10b981;font-weight:700;letter-spacing:1.041px;left:-42.00px;width:1200px;text-align:center;text-indent:1.041px;">$48,200</div>
<div class="t " style="top:472.90px;font-size:11.94px;line-height:14.92px;color:#64748b;letter-spacing:-0.451px;left:-42.00px;width:1200px;text-align:center;text-indent:-0.451px;">Immediate fix, no production loss</div>
<div class="a" style="left:831.00px;top:385.00px;width:514.00px;height:122.00px;box-sizing:border-box;border:1px solid #bcd4ee;border-radius:8px;background:#eff6ff;"></div>
<div class="t " style="top:402.81px;font-size:10.49px;line-height:13.11px;color:#64748b;letter-spacing:-0.662px;left:488.00px;width:1200px;text-align:center;text-indent:-0.662px;">EXPECTED (P50)</div>
<div class="t " style="top:430.38px;font-size:24px;line-height:30.0px;color:#4f46e5;font-weight:700;letter-spacing:1.008px;left:488.00px;width:1200px;text-align:center;text-indent:1.008px;">$32,500</div>
<div class="t " style="top:473.13px;font-size:11.7px;line-height:14.62px;color:#64748b;letter-spacing:-0.452px;left:488.00px;width:1200px;text-align:center;text-indent:-0.452px;">Scheduled maintenance window</div>
<div class="a" style="left:1361.00px;top:385.00px;width:514.00px;height:122.00px;box-sizing:border-box;border:1px solid #e8acae;border-radius:8px;background:#f8fafc;"></div>
<div class="t " style="top:402.74px;font-size:10.56px;line-height:13.2px;color:#64748b;letter-spacing:-0.551px;left:1018.00px;width:1200px;text-align:center;text-indent:-0.551px;">WORST CASE (P90)</div>
<div class="t " style="top:430.38px;font-size:24px;line-height:30.0px;color:#ef4444;font-weight:700;letter-spacing:1.113px;left:1018.00px;width:1200px;text-align:center;text-indent:1.113px;">-$127,800</div>
<div class="t " style="top:472.98px;font-size:11.86px;line-height:14.82px;color:#64748b;letter-spacing:-0.450px;left:1018.00px;width:1200px;text-align:center;text-indent:-0.450px;">Catastrophic failure, line shutdown</div>
<div class="a" style="left:301.00px;top:595.90px;width:85.30px;height:3.10px;background:#bfdbfe;border-radius:2px 2px 0 0;"></div>
<div class="a" style="left:388.55px;top:591.25px;width:85.30px;height:7.75px;background:#bfdbfe;border-radius:2px 2px 0 0;"></div>
<div class="a" style="left:476.10px;top:583.15px;width:85.30px;height:15.85px;background:#bfdbfe;border-radius:2px 2px 0 0;"></div>
<div class="a" style="left:563.65px;top:574.50px;width:85.30px;height:24.50px;background:#bfdbfe;border-radius:2px 2px 0 0;"></div>
<div class="a" style="left:651.20px;top:563.90px;width:85.30px;height:35.10px;background:#bfdbfe;border-radius:2px 2px 0 0;"></div>
<div class="a" style="left:738.75px;top:552.70px;width:85.30px;height:46.30px;background:#bfdbfe;border-radius:2px 2px 0 0;"></div>
<div class="a" style="left:826.30px;top:544.70px;width:85.30px;height:54.30px;background:#bfdbfe;border-radius:2px 2px 0 0;"></div>
<div class="a" style="left:913.85px;top:538.50px;width:85.30px;height:60.50px;background:#6366f1;border-radius:2px 2px 0 0;"></div>
<div class="a" style="left:1001.40px;top:535.00px;width:85.30px;height:64.00px;background:#6366f1;border-radius:2px 2px 0 0;"></div>
<div class="a" style="left:1088.95px;top:540.00px;width:85.30px;height:59.00px;background:#6366f1;border-radius:2px 2px 0 0;"></div>
<div class="a" style="left:1176.50px;top:549.00px;width:85.30px;height:50.00px;background:#bfdbfe;border-radius:2px 2px 0 0;"></div>
<div class="a" style="left:1264.05px;top:561.40px;width:85.30px;height:37.60px;background:#bfdbfe;border-radius:2px 2px 0 0;"></div>
<div class="a" style="left:1351.60px;top:572.00px;width:85.30px;height:27.00px;background:#bfdbfe;border-radius:2px 2px 0 0;"></div>
<div class="a" style="left:1439.15px;top:580.70px;width:85.30px;height:18.30px;background:#bfdbfe;border-radius:2px 2px 0 0;"></div>
<div class="a" style="left:1526.70px;top:587.20px;width:85.30px;height:11.80px;background:#bfdbfe;border-radius:2px 2px 0 0;"></div>
<div class="a" style="left:1614.25px;top:592.80px;width:85.30px;height:6.20px;background:#bfdbfe;border-radius:2px 2px 0 0;"></div>
<div class="a" style="left:1701.80px;top:595.90px;width:85.30px;height:3.10px;background:#bfdbfe;border-radius:2px 2px 0 0;"></div>
<div class="a" style="left:1789.35px;top:597.45px;width:85.30px;height:1.55px;background:#bfdbfe;border-radius:2px 2px 0 0;"></div>
<div class="a" style="left:301.00px;top:607.00px;width:1574.00px;height:1.00px;background:#f1f5f9;"></div>
<div class="t " style="top:617.28px;font-size:10px;line-height:12.5px;color:#64748b;letter-spacing:-0.249px;left:301.00px;">-$150K</div>
<div class="t " style="top:617.28px;font-size:10px;line-height:12.5px;color:#64748b;left:489.50px;width:1200px;text-align:center;">$0</div>
<div class="t " style="top:617.28px;font-size:10px;line-height:12.5px;color:#64748b;right:45.00px;text-align:right;">+$50K</div>
<div class="t " style="top:647.34px;font-size:12px;line-height:15.0px;color:#1e293b;font-weight:700;letter-spacing:-0.077px;left:301.00px;">Distribution:</div>
<div class="t " style="top:647.40px;font-size:11.94px;line-height:14.92px;color:#64748b;letter-spacing:-0.450px;left:374.80px;">Beta(2.1, 5.3)</div>
<div class="t " style="top:647.34px;font-size:12px;line-height:15.0px;color:#1e293b;font-weight:700;letter-spacing:-0.108px;left:466.00px;">Variance:</div>
<div class="t " style="top:647.39px;font-size:11.95px;line-height:14.94px;color:#64748b;letter-spacing:-0.449px;left:522.40px;">$23,400</div>
<div class="t " style="top:647.34px;font-size:12px;line-height:15.0px;color:#1e293b;font-weight:700;letter-spacing:-0.254px;left:587.20px;">Skewness:</div>
<div class="t " style="top:647.34px;font-size:12px;line-height:15.0px;color:#64748b;letter-spacing:-0.413px;left:651.50px;">-0.82</div>
<div class="a" style="left:280.00px;top:702.00px;width:1616.00px;height:199.00px;box-sizing:border-box;border:1px solid #e8ecf1;border-radius:12px;background:#fff;box-shadow:0 1px 3px 0 rgba(0,0,0,0.08),0 1px 2px -1px rgba(0,0,0,0.08);"></div>
<svg class="a" style="left:301.00px;top:723.90px;" width="24" height="24" viewBox="0 0 24 24" fill="#6366f1"><path d="M16 6l2.29 2.29-4.88 4.88-4-4L2 16.59 3.41 18l6-6 4 4 6.3-6.29L22 12V6z"/></svg>
<div class="t " style="top:726.47px;font-size:16.5px;line-height:20.62px;color:#1e293b;letter-spacing:-0.355px;left:333.80px;-webkit-text-stroke:0.25px #1e293b;">Risk-Adjusted Financial Model</div>
<div class="a" style="left:301.00px;top:766.30px;width:381.50px;height:114.00px;box-sizing:border-box;border:1px solid #e5e7eb;border-radius:10px;background:#f8fafc;"></div>
<div class="t " style="top:784.49px;font-size:10.71px;line-height:13.39px;color:#64748b;letter-spacing:-0.551px;left:-108.25px;width:1200px;text-align:center;text-indent:-0.551px;">NPV (RISK-ADJUSTED)</div>
<div class="t " style="top:808.57px;font-size:20px;line-height:25.0px;color:#10b981;font-weight:700;letter-spacing:0.917px;left:-108.25px;width:1200px;text-align:center;text-indent:0.917px;">$28,420</div>
<div class="t " style="top:846.44px;font-size:11.49px;line-height:14.36px;color:#64748b;letter-spacing:-0.448px;left:-108.25px;width:1200px;text-align:center;text-indent:-0.448px;">Discount rate: 8.5%</div>
<div class="a" style="left:698.50px;top:766.30px;width:381.50px;height:114.00px;box-sizing:border-box;border:1px solid #e5e7eb;border-radius:10px;background:#f8fafc;"></div>
<div class="t " style="top:784.71px;font-size:10.49px;line-height:13.11px;color:#64748b;letter-spacing:-1.033px;left:289.25px;width:1200px;text-align:center;text-indent:-1.033px;">IRR</div>
<div class="t " style="top:808.57px;font-size:20px;line-height:25.0px;color:#1e293b;font-weight:700;letter-spacing:1.216px;left:289.25px;width:1200px;text-align:center;text-indent:1.216px;">342%</div>
<div class="t " style="top:846.53px;font-size:11.39px;line-height:14.24px;color:#64748b;letter-spacing:-0.450px;left:289.25px;width:1200px;text-align:center;text-indent:-0.450px;">Exceeds hurdle rate</div>
<div class="a" style="left:1096.00px;top:766.30px;width:381.50px;height:114.00px;box-sizing:border-box;border:1px solid #e5e7eb;border-radius:10px;background:#f8fafc;"></div>
<div class="t " style="top:784.71px;font-size:10.49px;line-height:13.11px;color:#64748b;letter-spacing:-0.752px;left:686.75px;width:1200px;text-align:center;text-indent:-0.752px;">EXPECTED VALUE</div>
<div class="t " style="top:808.57px;font-size:20px;line-height:25.0px;color:#10b981;font-weight:700;letter-spacing:0.917px;left:686.75px;width:1200px;text-align:center;text-indent:0.917px;">$31,250</div>
<div class="t " style="top:846.56px;font-size:11.36px;line-height:14.2px;color:#64748b;letter-spacing:-0.450px;left:686.75px;width:1200px;text-align:center;text-indent:-0.450px;">EV = Σ(P × Outcome)</div>
<div class="a" style="left:1493.50px;top:766.30px;width:381.50px;height:114.00px;box-sizing:border-box;border:1px solid #e5e7eb;border-radius:10px;background:#f8fafc;"></div>
<div class="t " style="top:784.40px;font-size:10.81px;line-height:13.51px;color:#64748b;letter-spacing:-0.552px;left:1084.25px;width:1200px;text-align:center;text-indent:-0.552px;">VALUE AT RISK (95%)</div>
<div class="t " style="top:808.57px;font-size:20px;line-height:25.0px;color:#ef4444;font-weight:700;letter-spacing:0.917px;left:1084.25px;width:1200px;text-align:center;text-indent:0.917px;">$42,300</div>
<div class="t " style="top:846.11px;font-size:11.82px;line-height:14.78px;color:#64748b;letter-spacing:-0.449px;left:1084.25px;width:1200px;text-align:center;text-indent:-0.449px;">Maximum likely loss</div>
<div class="a" style="left:280.00px;top:918.00px;width:1616.00px;height:200.00px;box-sizing:border-box;border:1px solid #e8ecf1;border-radius:12px;background:#fff;box-shadow:0 1px 3px 0 rgba(0,0,0,0.08),0 1px 2px -1px rgba(0,0,0,0.08);"></div>
<svg class="a" style="left:301.00px;top:940.00px;" width="24" height="24" viewBox="0 0 24 24" fill="#6366f1"><path d="M22 10v12H2V10l7-3v2l5-2v3h8zm-4.8-1.5L18 2h3l.8 6.5h-4.6zM11 18h2v-4h-2v4zm-4 0h2v-4H7v4zm10-4h-2v4h2v-4z"/></svg>
<div class="t " style="top:943.47px;font-size:16.5px;line-height:20.62px;color:#1e293b;letter-spacing:-0.264px;left:333.80px;-webkit-text-stroke:0.25px #1e293b;">Production Impact Analysis</div>
<div class="a" style="left:301.00px;top:982.60px;width:381.50px;height:113.00px;box-sizing:border-box;border:1px solid #e5e7eb;border-radius:10px;background:#f8fafc;"></div>
<div class="t " style="top:1003.38px;font-size:24px;line-height:30.0px;color:#ef4444;font-weight:700;letter-spacing:1.010px;left:-108.25px;width:1200px;text-align:center;text-indent:1.010px;">2,175</div>
<div class="a" style="left:698.50px;top:982.60px;width:381.50px;height:113.00px;box-sizing:border-box;border:1px solid #e5e7eb;border-radius:10px;background:#f8fafc;"></div>
<div class="t " style="top:1003.38px;font-size:24px;line-height:30.0px;color:#ef4444;font-weight:700;letter-spacing:1.074px;left:289.25px;width:1200px;text-align:center;text-indent:1.074px;">$27,187</div>
<div class="a" style="left:1096.00px;top:982.60px;width:381.50px;height:113.00px;box-sizing:border-box;border:1px solid #e5e7eb;border-radius:10px;background:#f8fafc;"></div>
<div class="t " style="top:1003.38px;font-size:24px;line-height:30.0px;color:#1e293b;font-weight:700;letter-spacing:0.804px;left:686.75px;width:1200px;text-align:center;text-indent:0.804px;">16</div>
<div class="a" style="left:1493.50px;top:982.60px;width:381.50px;height:113.00px;box-sizing:border-box;border:1px solid #e5e7eb;border-radius:10px;background:#f8fafc;"></div>
<div class="t " style="top:1003.53px;font-size:23.85px;line-height:29.81px;color:#1e293b;font-weight:700;letter-spacing:-0.452px;left:1084.25px;width:1200px;text-align:center;text-indent:-0.452px;">Assembly Line 3</div>
<div class="a" style="left:256.00px;top:1048.00px;width:1664.00px;height:32.00px;background:#ffffff;"></div>
<div class="a" style="left:256.00px;top:1048.00px;width:1664.00px;height:1.00px;background:#e5e7eb;box-shadow:0 -1px 3px rgba(0,0,0,0.06);"></div>
<svg class="a" style="left:279.70px;top:1057.50px;" width="16" height="16" viewBox="0 0 24 24" fill="#9ca3af"><path d="M12 2C6.48 2 2 6.48 2 12s4.48 10 10 10 10-4.48 10-10S17.52 2 12 2zm1 15h-2v-6h2v6zm0-8h-2V7h2v2z"/></svg>
<div class="t " style="top:1056.64px;font-size:12px;line-height:15.0px;color:#6b7280;letter-spacing:-0.318px;left:304.00px;">Manufacturing ERP System v1.0</div>
<div class="t " style="top:1057.11px;font-size:11.51px;line-height:14.39px;color:#94a3b8;letter-spacing:-0.449px;left:1586.70px;">© 2025 All Rights Reserved</div>
<div class="t " style="top:1056.64px;font-size:12px;line-height:15.0px;color:#94a3b8;left:1724.40px;">|</div>
<div class="t " style="top:1057.38px;font-size:11.24px;line-height:14.05px;color:#94a3b8;letter-spacing:-0.450px;left:1735.60px;">Privacy Policy</div>
<div class="t " style="top:1056.64px;font-size:12px;line-height:15.0px;color:#94a3b8;left:1807.60px;">|</div>
<div class="t " style="top:1057.40px;font-size:11.22px;line-height:14.03px;color:#94a3b8;letter-spacing:-0.450px;left:1818.90px;">Terms of Service</div>
</div></body></html>
